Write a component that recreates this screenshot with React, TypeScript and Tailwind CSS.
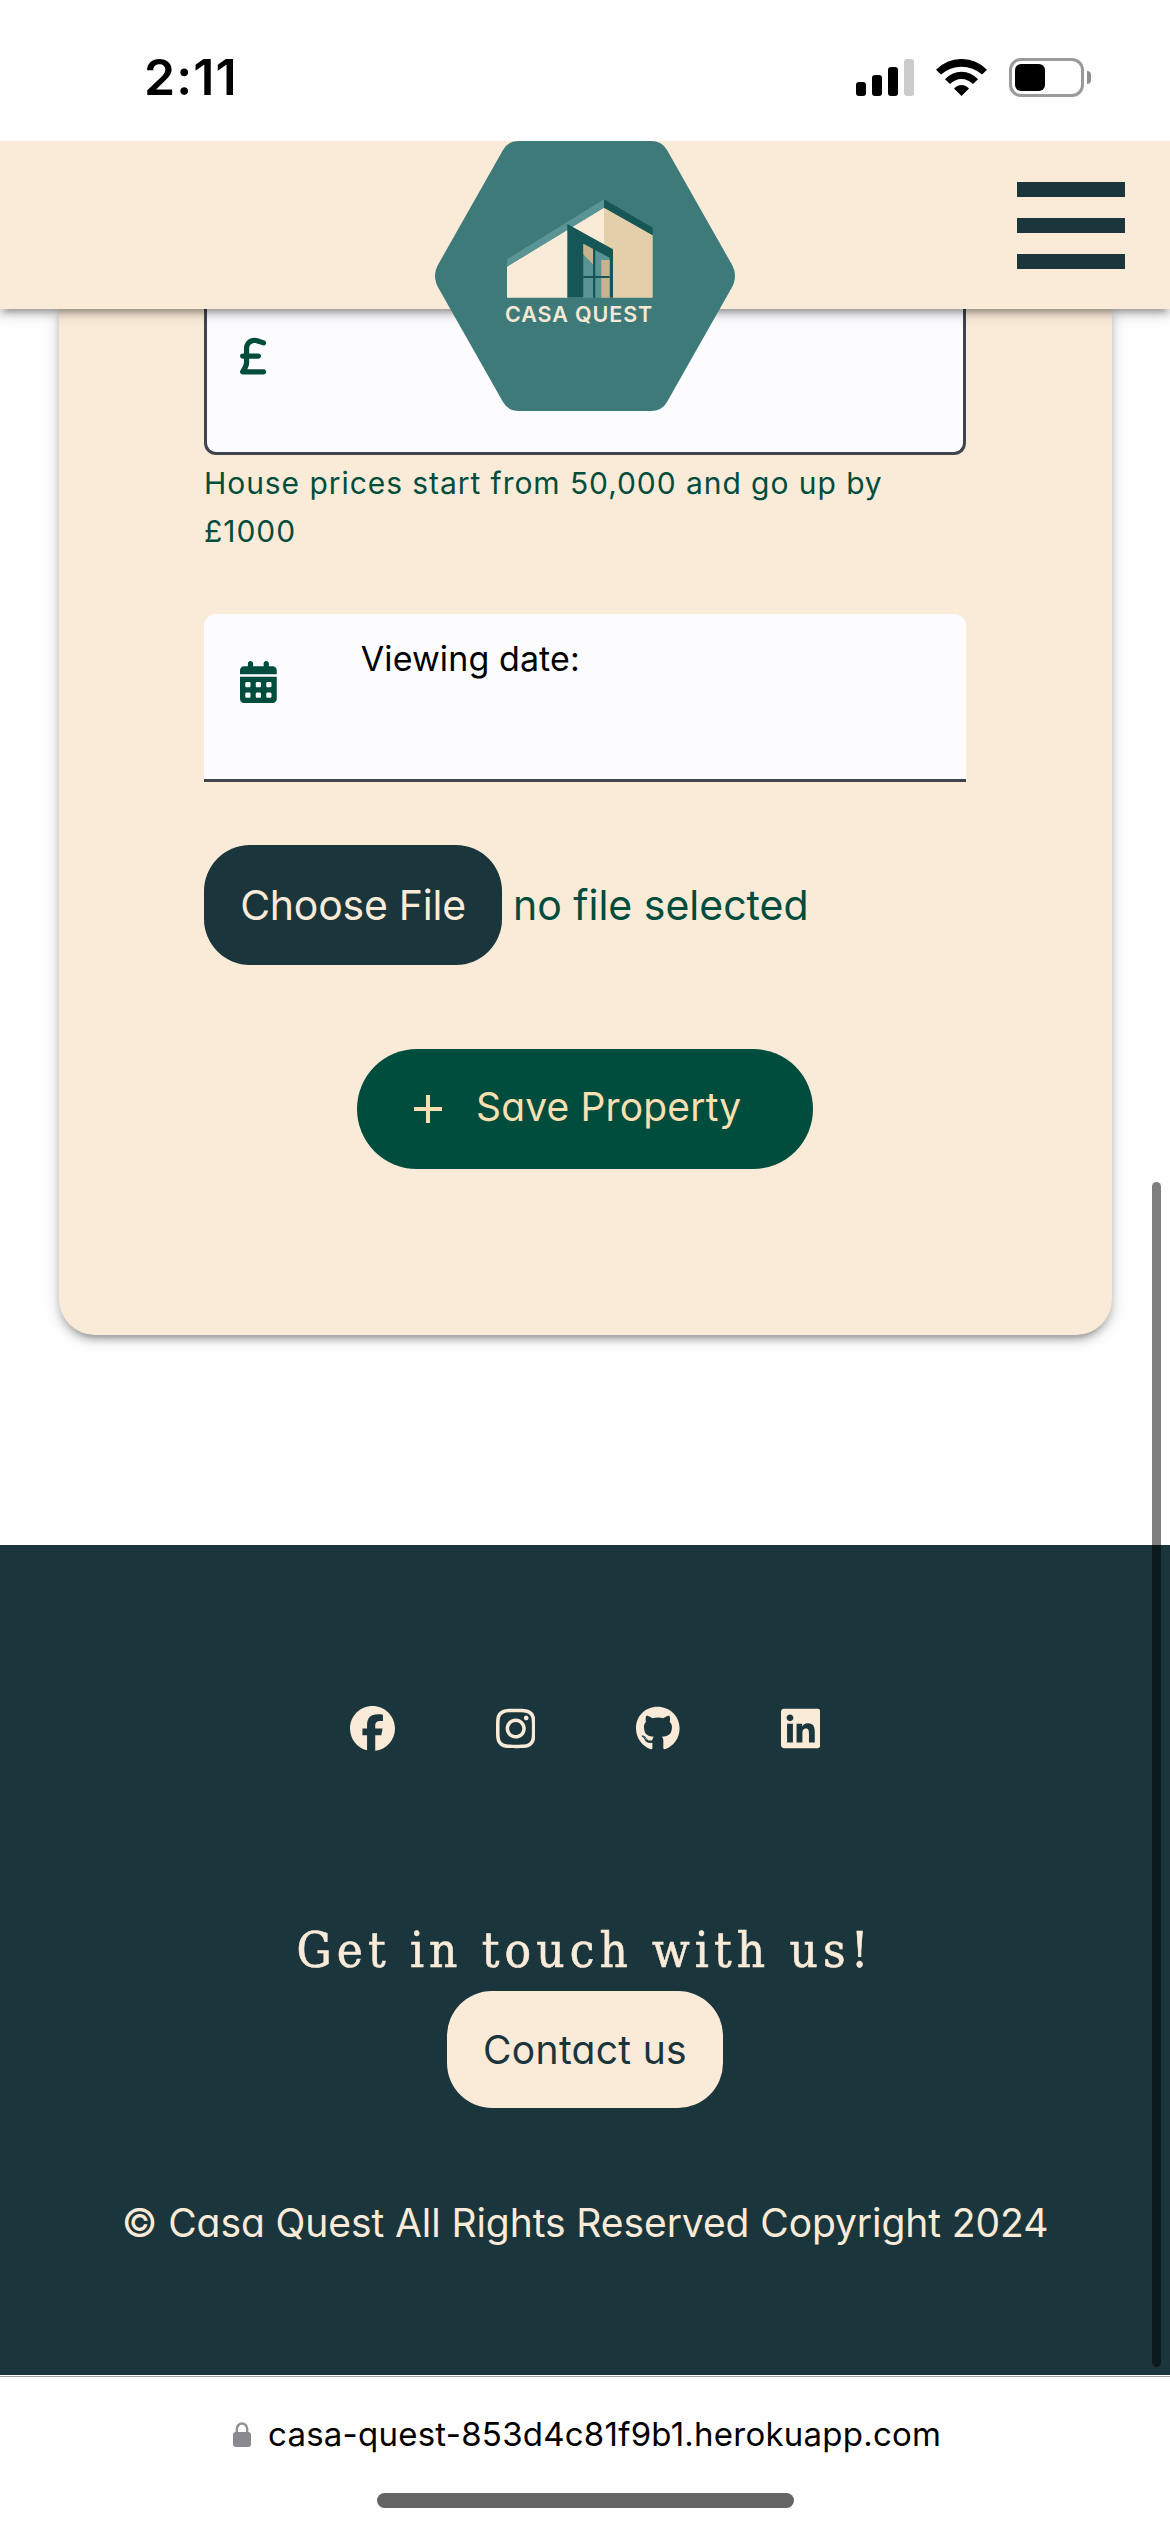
import { FaCalendarDays, FaFacebook, FaGithub, FaInstagram, FaLinkedin, FaSterlingSign } from "react-icons/fa6";

const CARD_SHADOW =
  "shadow-[0_6px_6px_0_rgba(0,0,0,0.14),0_9px_3px_-6px_rgba(0,0,0,0.12),0_3px_15px_0_rgba(0,0,0,0.2)]";

function StatusBar() {
  return (
    <div className="relative z-20 flex h-[141px] shrink-0 items-start justify-between bg-[#fefefe] pl-[144px] pr-[79px] pt-[58px]">
      <span className="h-[39px] text-[50px] font-semibold leading-[39px] tracking-[1.1px]">2:11</span>
      <div className="flex h-[39px] items-center">
        <div className="flex h-[37px] items-end gap-[6px]">
          <i className="h-[14px] w-[10px] rounded-[3px] bg-black" />
          <i className="h-[21px] w-[10px] rounded-[3px] bg-black" />
          <i className="h-[29px] w-[10px] rounded-[3px] bg-black" />
          <i className="h-[37px] w-[10px] rounded-[3px] bg-[#cbcbcb]" />
        </div>
        <svg className="ml-[22px] h-[37px] w-[51px]" viewBox="0 0 51 37">
          <path d="M0 10.7A35.7 35.7 0 0 1 51 10.7L46 15.6A30.8 30.8 0 0 0 5 15.6Z" />
          <path d="M9 20.3A21.9 21.9 0 0 1 42 20.3L37 25.1A15.7 15.7 0 0 0 14 25.1Z" />
          <path d="M18 29.6A9.5 9.5 0 0 1 33 29.6L25.5 37Z" />
        </svg>
        <div className="ml-[22px] h-[39px] w-[75px] rounded-[12px] border-[3px] border-[#9a9a9a] p-[3px]">
          <div className="h-[27px] w-[30px] rounded-[6px] bg-black" />
        </div>
        <i className="ml-[3px] h-[13px] w-[4px] rounded-r-full bg-[#8f8f8f]" />
      </div>
    </div>
  );
}

function Logo() {
  return (
    <div className="absolute left-[435px] top-0 h-[270px] w-[300px]">
      <svg className="h-full w-full" viewBox="0 0 300 270">
        <path
          fill="#3f7a7a"
          d="M68 9Q73 0 84 0H216Q227 0 232 9L296 122Q304 135 296 148L232 261Q227 270 216 270H84Q73 270 68 261L4 148Q-4 135 4 122Z"
        />
        <path fill="#faebd9" d="M72 125.5 169 66.5V156.7H72Z" />
        <path fill="#e3cfa9" d="M169 66 217.7 94V156.7H169Z" />
        <path fill="#5a9494" d="M72 118.3 169 58.3V66.7L72 125.7Z" />
        <path fill="#175656" d="M169 58.3 217.7 86.7V94.3L169 66.7Z" />
        <path fill="#175656" d="M132.3 83 178 108.3V156.7H132.3Z" />
        <path fill="#5a9494" d="M148.3 102.7 174.7 116.7V156.7H148.3Z" />
        <path fill="#c7b38e" d="M148.3 102.7 158 108V123.3L148.3 113.3ZM166.3 119H174.7V156.7H166.3Z" />
        <path fill="#175656" d="M158 107.5H160.3V156.7H158ZM148.3 135H174.7V137H148.3Z" />
      </svg>
      <span className="absolute left-[70px] top-[163px] whitespace-nowrap text-[21.5px] font-semibold leading-[21px] tracking-[0.9px] text-[#f6e8d2]">
        CASA QUEST
      </span>
    </div>
  );
}

function Header() {
  return (
    <header className={`relative z-10 flex h-[168px] shrink-0 items-start justify-end bg-[#faebd9] pr-[45px] pt-[41px] ${CARD_SHADOW}`}>
      <Logo />
      <div className="flex w-[108px] flex-col gap-[21px]">
        <i className="h-[15px] bg-[#1a353b]" />
        <i className="h-[15px] bg-[#1a353b]" />
        <i className="h-[15px] bg-[#1a353b]" />
      </div>
    </header>
  );
}

function PropertyForm() {
  return (
    <main className="h-[1236px] shrink-0 bg-[#fefefe] pl-[59px] pr-[58px]">
      <div className={`flex h-[1026px] flex-col rounded-b-[36px] bg-[#faebd9] pl-[145px] pr-[146px] text-[#004d3d] ${CARD_SHADOW}`}>
        <div className="h-[146px] shrink-0 rounded-b-[12px] border-x-[3px] border-b-[3px] border-[#40444d] bg-[#fcfcff] pl-[33px] pt-[26px]">
          <FaSterlingSign className="h-[42px] w-[26.25px]" />
        </div>
        <p className="mt-[4px] text-[30px] leading-[48px] tracking-[0.94px]">
          House prices start from 50,000 and go up by £1000
        </p>
        <div className="mt-[59px] flex h-[168px] shrink-0 rounded-t-[12px] border-b-[3px] border-[#40444d] bg-[#fcfcff] pl-[36px]">
          <FaCalendarDays className="mt-[47px] h-[42px] w-[36.75px]" />
          <label className="ml-[84px] mt-[25px] h-[40px] text-[34px] leading-[40px] tracking-[0.1px] text-black">Viewing date:</label>
        </div>
        <div className="mt-[63px] flex h-[120px] shrink-0 items-center text-[41px]">
          <button className="h-[120px] w-[298px] rounded-[46px] bg-[#1a353b] leading-[120px] tracking-[-0.25px] text-[#faebd9]">
            Choose File
          </button>
          <span className="ml-[11px] mt-[1px]">no file selected</span>
        </div>
        <button className="mt-[84px] flex h-[120px] w-[456px] shrink-0 items-center self-center rounded-full bg-[#004d3d] pl-[57px] text-[#fadfb1]">
          <svg className="h-[28px] w-[28px]" viewBox="0 0 28 28">
            <path d="M14 0V28M0 14H28" stroke="currentColor" strokeWidth="4" />
          </svg>
          <span className="-mt-[4px] ml-[34px] text-[39px] leading-[50px] tracking-[0.15px] [font-feature-settings:'cv11']">Save Property</span>
        </button>
      </div>
    </main>
  );
}

function Footer() {
  return (
    <footer className="flex h-[830px] shrink-0 flex-col items-center bg-[#1a353b] pt-[160px] text-[#faebd9]">
      <div className="flex h-[46px] items-center gap-[101px] text-[45px]">
        <FaFacebook className="h-[45px] w-[45px]" />
        <FaInstagram className="h-[45px] w-[39.4px]" />
        <FaGithub className="h-[45px] w-[43.6px]" />
        <FaLinkedin className="h-[45px] w-[39.4px]" />
      </div>
      <h5 className="mt-[170px] h-[60px] whitespace-nowrap font-['DejaVu_Serif_Condensed','DejaVu_Serif',serif] text-[49px] leading-[60px] tracking-[5.1px] text-[#faebd9] [-webkit-text-stroke:0.6px_#faebd9]">
        Get in touch with us!
      </h5>
      <a className="mt-[10px] h-[117px] w-[276px] rounded-[45px] bg-[#faebd9] text-center text-[39px] leading-[117px] tracking-[0.3px] text-[#1a353b] [font-feature-settings:'cv11']">
        Contact us
      </a>
      <p className="mt-[90px] whitespace-nowrap text-[39px] leading-[50px] tracking-[-0.08px] [font-feature-settings:'cv11']">
        © Casa Quest All Rights Reserved Copyright 2024
      </p>
    </footer>
  );
}

function BrowserBar() {
  return (
    <div className="flex h-[157px] shrink-0 flex-col items-center bg-[#fefefe]">
      <div className="mt-[1px] h-[1px] w-full shrink-0 bg-[#a09fa1]" />
      <div className="mt-[37px] flex h-[40px] items-center self-start pl-[233px]">
        <svg className="h-[25px] w-[18px]" viewBox="0 0 18 25">
          <path d="M3.8 11V7.2A5.2 5.7 0 0 1 14.2 7.2V11" fill="none" stroke="#919196" strokeWidth="2.4" />
          <rect y="10" width="18" height="15" rx="3" fill="#89898f" />
        </svg>
        <span className="ml-[17px] whitespace-nowrap text-[33px] leading-[40px] tracking-[0.24px]">casa-quest-853d4c81f9b1.herokuapp.com</span>
      </div>
      <div className="mt-[39px] h-[15px] w-[417px] rounded-full bg-[#646464]" />
    </div>
  );
}

export default function App() {
  return (
    <div className="relative flex h-[2532px] w-[1170px] flex-col overflow-hidden bg-[#fefefe] font-['Inter',sans-serif] text-black">
      <StatusBar />
      <Header />
      <PropertyForm />
      <Footer />
      <BrowserBar />
      <div className="absolute right-[9px] top-[1182px] z-20 h-[1185px] w-[9px] rounded-full bg-black/50" />
    </div>
  );
}
